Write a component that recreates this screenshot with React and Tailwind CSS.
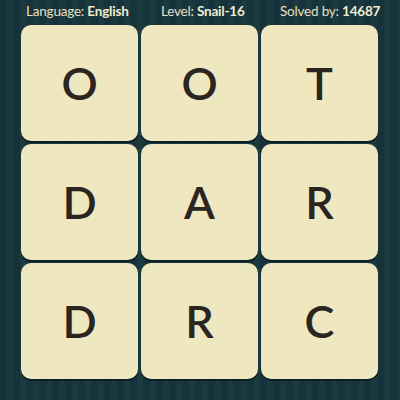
import React from 'react';

const LETTERS = ['O', 'O', 'T', 'D', 'A', 'R', 'D', 'R', 'C'];

export default function App() {
    return (
        <div className="w-[400px] h-[400px] overflow-hidden bg-[repeating-linear-gradient(90deg,#16323a_0px,#16323a_7px,#1a3a40_7px,#1a3a40_13px)] font-['Lato',sans-serif]">
            {/* header */}
            <div className="h-[24px] flex items-center pl-[26px] text-[13.5px] tracking-[-0.2px] text-[#e6e0c4] leading-none pb-[1px]">
                <span className="w-[135px]">Language: <b className="font-bold text-[#f1ebd0]">English</b></span>
                <span className="w-[119px]">Level: <b className="font-bold text-[#f1ebd0]">Snail-16</b></span>
                <span>Solved by: <b className="font-bold text-[#f1ebd0]">14687</b></span>
            </div>

            {/* board */}
            <div className="ml-[21px] mt-[1px] grid grid-cols-[repeat(3,117px)] grid-rows-[repeat(3,116px)] gap-x-[3px] gap-y-[3px]">
                {LETTERS.map((ch, i) => (
                    <div
                        key={i}
                        className="rounded-[10px] bg-[#efe7bf] shadow-[0_2px_0_#0c1f22] flex items-center justify-center text-[45px] font-semibold text-[#2a2521] leading-none"
                    >
                        {ch}
                    </div>
                ))}
            </div>
        </div>
    );
}
